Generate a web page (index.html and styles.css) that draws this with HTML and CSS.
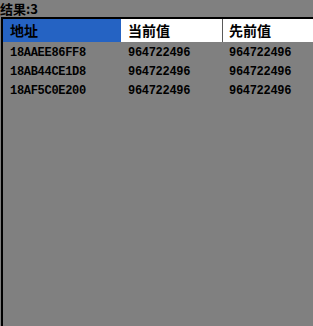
FILE: index.html
```html
<!DOCTYPE html>
<html>
<head>
<meta charset="utf-8">
<link rel="stylesheet" href="styles.css">
</head>
<body>
<div class="title">结果:3</div>
<div class="panel">
  <div class="grid head">
    <div class="cell sel">地址</div>
    <div class="cell">当前值</div>
    <div class="cell sep">先前值</div>
  </div>
  <div class="grid row">
    <div class="cell">18AAEE86FF8</div>
    <div class="cell">964722496</div>
    <div class="cell">964722496</div>
  </div>
  <div class="grid row">
    <div class="cell">18AB44CE1D8</div>
    <div class="cell">964722496</div>
    <div class="cell">964722496</div>
  </div>
  <div class="grid row">
    <div class="cell">18AF5C0E200</div>
    <div class="cell">964722496</div>
    <div class="cell">964722496</div>
  </div>
</div>
</body>
</html>
```
FILE: styles.css
```css
html, body {
  margin: 0;
  padding: 0;
  height: 100%;
  background: #808080;
  overflow: hidden;
}
body {
  display: flex;
  flex-direction: column;
  font-family: "Liberation Mono", "Noto Sans CJK SC", monospace;
  color: #000;
}
.title {
  height: 17px;
  line-height: 17px;
  font-family: "Noto Sans CJK SC", sans-serif;
  font-size: 13px;
  font-weight: bold;
  flex: none;
}
.panel {
  flex: 1;
  margin-left: 1px;
  border-top: 2px solid #000;
  border-left: 2px solid #000;
  min-height: 0;
}
.grid {
  display: grid;
  grid-template-columns: 118px 101px 1fr;
}
.head {
  height: 23px;
  font-family: "Noto Sans CJK SC", sans-serif;
  font-size: 14px;
  font-weight: bold;
}
.head .cell {
  background: #fff;
  line-height: 23px;
  padding-left: 7px;
}
.head .cell.sel {
  background: #2563c3;
}
.head .cell.sep {
  border-left: 1px solid #5a5a5a;
  padding-left: 6px;
}
.row {
  height: 19px;
  line-height: 19px;
  font-size: 12px;
  letter-spacing: -0.3px;
  font-weight: bold;
}
.row .cell {
  padding-left: 7px;
}
.head + .row {
  margin-top: 2px;
}
```
